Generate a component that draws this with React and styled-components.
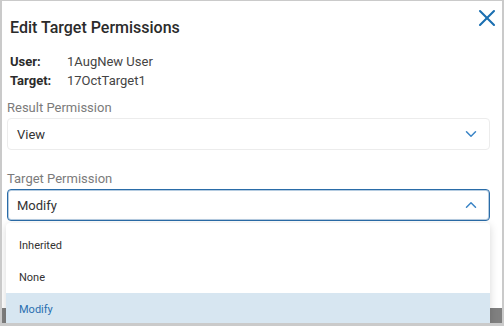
import React from 'react';
import styled, { createGlobalStyle } from 'styled-components';
import { X, ChevronDown, ChevronUp } from 'lucide-react';

const GlobalStyle = createGlobalStyle`
  body {
    margin: 0;
    font-family: Roboto, "Noto Sans", sans-serif;
    background: #ffffff;
  }
  * { box-sizing: border-box; }
`;

const Frame = styled.div`
  width: 504px;
  height: 326px;
  border-style: solid;
  border-color: #cacaca;
  border-width: 1px 2px 3px 2px;
  background: #808080;
  overflow: hidden;
`;

const Dialog = styled.div`
  height: 307px;
  background: #ffffff;
  display: flex;
  flex-direction: column;
`;

const Header = styled.div`
  display: flex;
  justify-content: space-between;
  align-items: flex-start;
  padding-left: 8px;
`;

const Title = styled.h2`
  margin: 16px 0 0;
  font-size: 16px;
  line-height: 21px;
  font-weight: 500;
  color: #2b2b2b;
`;

const CloseButton = styled.button`
  margin: 3px 1px 0 0;
  padding: 0;
  border: none;
  background: none;
  display: flex;
  color: #1b6fb1;
  cursor: pointer;
`;

const Info = styled.div`
  margin-top: 14px;
  padding-left: 8px;
  display: grid;
  grid-template-columns: 57px auto;
  font-size: 13px;
  line-height: 19px;
`;

const InfoLabel = styled.span`
  font-weight: 700;
  color: #2b2b2b;
`;

const InfoValue = styled.span`
  color: #444;
`;

const Field = styled.div`
  margin-top: ${(p) => p.$top}px;
  padding: 0 12px 0 5px;
`;

const FieldLabel = styled.div`
  font-size: 13px;
  line-height: 16px;
  color: #7b7b7b;
  margin-bottom: 2px;
`;

const SelectWrap = styled.div`
  position: relative;
`;

const SelectBox = styled.div`
  height: 32px;
  display: flex;
  align-items: center;
  justify-content: space-between;
  padding: 0 9px 0 9px;
  border-radius: 4px;
  border: 1px solid ${(p) => (p.$open ? '#2a6ca8' : '#ececec')};
  box-shadow: ${(p) => (p.$open ? 'inset 0 0 0 1px rgba(42,108,168,0.35)' : 'none')};
  font-size: 13px;
  color: #333;
  background: #fff;
`;

const Chevron = styled.span`
  display: flex;
  color: #3a84c6;
`;

const Menu = styled.ul`
  position: absolute;
  top: calc(100% + 2px);
  left: -1px;
  right: 0;
  margin: 0;
  padding: 6px 0 0;
  list-style: none;
  background: #fff;
  border-radius: 4px;
  box-shadow: 0 2px 8px rgba(0, 0, 0, 0.16);
`;

const MenuItem = styled.li`
  height: 32px;
  display: flex;
  align-items: center;
  padding-left: 13px;
  font-size: 11px;
  color: ${(p) => (p.$selected ? '#2a6fb0' : '#333')};
  background: ${(p) => (p.$selected ? '#d7e6f1' : 'transparent')};
`;

const options = ['Inherited', 'None', 'Modify'];

export default function App() {
  return (
    <>
      <GlobalStyle />
      <Frame>
        <Dialog>
          <Header>
            <Title>Edit Target Permissions</Title>
            <CloseButton aria-label="Close">
              <X size={28} strokeWidth={1.8} />
            </CloseButton>
          </Header>
          <Info>
            <InfoLabel>User:</InfoLabel>
            <InfoValue>1AugNew User</InfoValue>
            <InfoLabel>Target:</InfoLabel>
            <InfoValue>17OctTarget1</InfoValue>
          </Info>
          <Field $top={10}>
            <FieldLabel>Result Permission</FieldLabel>
            <SelectWrap>
              <SelectBox>
                View
                <Chevron><ChevronDown size={18} strokeWidth={2} /></Chevron>
              </SelectBox>
            </SelectWrap>
          </Field>
          <Field $top={21}>
            <FieldLabel>Target Permission</FieldLabel>
            <SelectWrap>
              <SelectBox $open>
                Modify
                <Chevron><ChevronUp size={18} strokeWidth={2} /></Chevron>
              </SelectBox>
              <Menu>
                {options.map((o) => (
                  <MenuItem key={o} $selected={o === 'Modify'}>{o}</MenuItem>
                ))}
              </Menu>
            </SelectWrap>
          </Field>
        </Dialog>
      </Frame>
    </>
  );
}
